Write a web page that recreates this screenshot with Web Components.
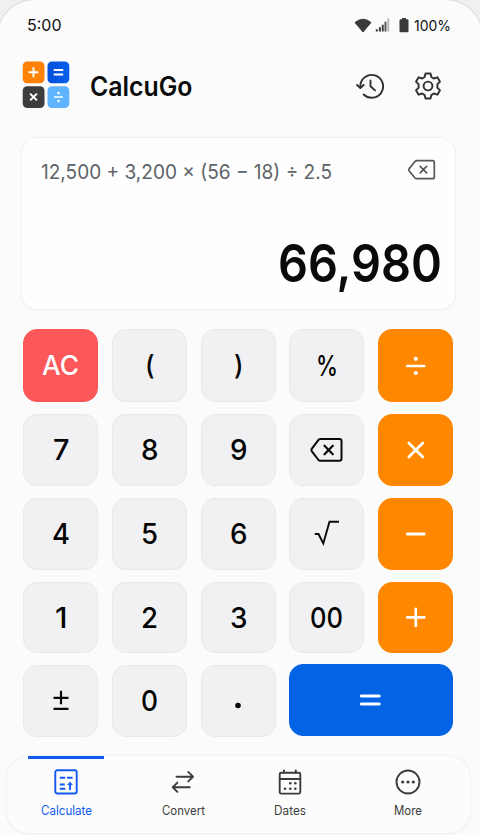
<!DOCTYPE html>
<html lang="en">
<head>
<meta charset="utf-8">
<title>CalcuGo</title>
<style>
html,body{margin:0;height:100%;background:#f0f0f1;overflow:hidden}
body{font-family:Inter,"Liberation Sans",sans-serif;color:#0a0a0a}
</style>
</head>
<body>
<calcu-app></calcu-app>
<script>
const ICONS = {
  wifi: [18,15,'<path d="M1 4.500Q9-2 17 4.500L9 14Z" fill="#3a3a3a" stroke="#3a3a3a" stroke-linejoin="round"/>'],
  signal: [15,14,'<path d="M.8 11.200h2v2.300h-2zM3.900 9.200h2v4.300h-2zM6.800 6.700h1.900v6.800h-1.900z" fill="#3a3a3a"/><path d="M9.500 3.700h1.900v9.800h-1.900z" fill="#555"/><path d="M12.200.5h2v13h-2z" fill="#b9b9b9"/>'],
  battery: [10,16,'<path d="M3 1h4v1.200h1.300q1.200 0 1.200 1.200v10.600q0 1.200-1.200 1.200H1.700Q.5 15.200.5 14V3.400Q.5 2.200 1.700 2.200H3Z" fill="#3a3a3a"/>'],
  history: [28,26,'<g fill="none" stroke="#303030" stroke-width="1.900" stroke-linecap="round" stroke-linejoin="round"><path d="M4.300 14.500V12.800A11.400 11.400 0 1 1 7.700 21.500"/><path d="M1 12l3.400 3.100L7.600 12"/><path d="M14.500 7.500v5.700l4.500 4.200"/></g>'],
  gear: [28,28,'<g fill="none" stroke="#303030" stroke-width="1.900" stroke-linejoin="round"><path d="M11.500 1.500h5l.9 3.600q1.300.5 2.300 1.400l3.700-1.200 2.600 4.400-2.700 2.700q.3 1.600 0 3.200l2.700 2.700-2.600 4.400-3.700-1.200q-1 .9-2.300 1.400l-.9 3.600h-5l-.9-3.600q-1.300-.5-2.300-1.400l-3.700 1.200L2 18.300l2.700-2.700q-.3-1.600 0-3.200L2 9.700l2.600-4.400 3.700 1.200q1-.9 2.300-1.400Z"/><circle cx="14" cy="14" r="4.400"/></g>'],
  erase: [28,22,'<g fill="none" stroke="#55585b" stroke-width="1.700" stroke-linecap="round" stroke-linejoin="round"><path d="M8.800 1.700H24.500Q26.300 1.700 26.300 3.500V17.900Q26.300 19.700 24.500 19.700H8.800Q7.700 19.700 7 19L1.200 12Q.4 10.800 1.200 9.600L7 2.500Q7.700 1.700 8.800 1.700Z"/><path d="M12.200 7.300l6.400 6.600M18.600 7.300l-6.400 6.600"/></g>'],
  backspace: [33,26,'<g fill="none" stroke="#0a0a0a" stroke-width="2" stroke-linecap="round" stroke-linejoin="round"><path d="M10.300 2H29.500Q31.500 2 31.500 4V21.800Q31.500 23.800 29.500 23.800H10.300Q9.300 23.800 8.500 23L1.900 14.300Q1 13 1.900 11.600L8.500 2.900Q9.300 2 10.300 2Z"/><path d="M14.500 8.700l8.300 8.600M22.800 8.700l-8.300 8.600" stroke-width="2.200"/></g>'],
  root: [26,29,'<path d="M.8 14h3.700L9.300 23.500 15.500 1.800H25" fill="none" stroke="#0a0a0a" stroke-width="1.900"/>'],
  divide: [20,20,'<path d="M1.300 10h17" stroke="#fff" stroke-width="2.700" stroke-linecap="round"/><circle cx="9.800" cy="2.800" r="2.100" fill="#fff"/><circle cx="9.800" cy="17" r="2.100" fill="#fff"/>'],
  times: [20,20,'<path d="M2.800 3l14 14M16.800 3L2.800 17" stroke="#fff" stroke-width="2.700" stroke-linecap="round"/>'],
  minus: [20,20,'<path d="M1.300 10h17" stroke="#fff" stroke-width="2.800" stroke-linecap="round"/>'],
  plus: [20,22,'<path d="M1.300 10.400h17M9.800 1.900v17" stroke="#fff" stroke-width="2.600" stroke-linecap="round"/>'],
  equal: [22,14,'<path d="M1.200 3h18M1.200 11h18" stroke="#fff" stroke-width="3" stroke-linecap="round"/>'],
  plusminus: [16,22,'<path d="M.5 7.800h15M8 .8v13.500M.5 18.800h15" stroke="#0a0a0a" stroke-width="2.200" fill="none"/>'],
  dot: [6,16,'<circle cx="3" cy="12.500" r="2.800" fill="#0a0a0a"/>'],
  calculate: [24,26,'<g fill="none" stroke="#1259f0" stroke-width="1.900"><rect x="1.300" y="1.300" width="21.400" height="23.200" rx="2"/><path d="M5.800 8.700h5.400M13 8.700h5.600M5.800 15.500h5M5.800 19.700h5.400M16 13.500v7.600"/><path d="M13.700 15.700L16 13.300l2.300 2.400Z" fill="#1259f0" stroke-width=".8"/></g>'],
  convert: [24,24,'<g fill="none" stroke="#3c3c3c" stroke-width="1.900" stroke-linecap="round" stroke-linejoin="round"><path d="M5.500 6.700H22M17.200 1.900L22 6.700l-4.800 4.700M18.800 17.300H1.800M6.400 12.600l-4.700 4.700 4.700 4.600"/></g>'],
  dates: [24,26,'<g fill="none" stroke="#3c3c3c" stroke-width="1.900" stroke-linecap="round"><rect x="1.700" y="3.800" width="20.600" height="20.800" rx="1.500"/><path d="M1.700 10h20.600M6 1.500v2.300M17.800 1.500v2.300"/></g><g fill="#3c3c3c"><circle cx="12.300" cy="14.200" r="1.300"/><circle cx="17.300" cy="14.200" r="1.300"/><circle cx="7" cy="19.700" r="1.300"/><circle cx="12.300" cy="19.700" r="1.300"/><circle cx="17.300" cy="19.700" r="1.300"/></g>'],
  more: [26,26,'<circle cx="13" cy="13" r="11.500" fill="none" stroke="#3c3c3c" stroke-width="1.900"/><g fill="#3c3c3c"><circle cx="7.700" cy="13" r="1.600"/><circle cx="13" cy="13" r="1.600"/><circle cx="18.300" cy="13" r="1.600"/></g>'],
  logo: [48,48,'<defs><linearGradient id="b" x2="1"><stop stop-color="#0050da"/><stop offset="1" stop-color="#0a60ec"/></linearGradient></defs><rect x=".700" y=".500" width="21.800" height="21.800" rx="4.500" fill="#ff8205"/><rect x="25.500" y=".500" width="21.800" height="21.800" rx="4.500" fill="url(#b)"/><rect x=".700" y="25.200" width="21.800" height="21.800" rx="4.500" fill="#3d3d3e"/><rect x="25.500" y="25.200" width="21.800" height="21.800" rx="4.500" fill="#5eb4ff"/><path d="M6.500 11.300h10M11.500 6.300v10M31.700 9h9.500M31.700 13.500h9.500M8.100 32.600l6.800 6.800M14.900 32.600L8.100 39.400" stroke="#fff" stroke-width="2"/><path d="M32 36h9" stroke="#fff" stroke-width="1.500"/><circle cx="36.500" cy="32" r="1.300" fill="#fff"/><circle cx="36.500" cy="40" r="1.300" fill="#fff"/>']
};
class UiIcon extends HTMLElement{
  connectedCallback(){
    const [w,h,body]=ICONS[this.getAttribute('name')];
    this.attachShadow({mode:'open'}).innerHTML=`<style>:host{display:block;flex:none;width:${w}px;height:${h}px}svg{display:block}</style><svg width="${w}" height="${h}" viewBox="0 0 ${w} ${h}">${body}</svg>`;
  }
}
/* One line of text set to an exact measure. */
class FitText extends HTMLElement{
  connectedCallback(){
    const w=+this.getAttribute('width'),s=+this.getAttribute('size'),wt=this.getAttribute('weight')||400;
    this.attachShadow({mode:'open'}).innerHTML=`<style>:host{display:block;flex:none;width:${w}px;height:${s}px}svg{display:block;overflow:visible}text{font-size:${s}px;font-weight:${wt};fill:currentColor}</style><svg width="${w}" height="${s}"><text x="0" y="${s*.864}" textLength="${w}" lengthAdjust="spacingAndGlyphs">${this.getAttribute('text')}</text></svg>`;
  }
}
class StatusBar extends HTMLElement{
  connectedCallback(){
    this.attachShadow({mode:'open'}).innerHTML=`<style>
:host{display:flex;align-items:center;height:50px;padding:0 29px 0 27px;box-sizing:border-box;color:#111}
.s{flex:1}.sig{margin:0 9px 0 3px}.bat{margin-right:5px}</style>
<fit-text text="5:00" width="34.500" size="16.500" weight="430"></fit-text><span class="s"></span>
<ui-icon name="wifi"></ui-icon><ui-icon class="sig" name="signal"></ui-icon><ui-icon class="bat" name="battery"></ui-icon>
<fit-text text="100%" width="37" size="15" weight="430"></fit-text>`;
  }
}
class AppHeader extends HTMLElement{
  connectedCallback(){
    this.attachShadow({mode:'open'}).innerHTML=`<style>
:host{display:flex;align-items:center;height:70px;padding:0 38px 0 22px;box-sizing:border-box}
.t{margin:2px 0 0 20px}.s{flex:1}.g{margin:2px 0 0 30px}.h{margin-top:2px}</style>
<ui-icon name="logo"></ui-icon><fit-text class="t" text="CalcuGo" width="102.500" size="26.500" weight="580"></fit-text><span class="s"></span>
<ui-icon class="h" name="history"></ui-icon><ui-icon class="g" name="gear"></ui-icon>`;
  }
}
class CalcDisplay extends HTMLElement{
  connectedCallback(){
    this.attachShadow({mode:'open'}).innerHTML=`<style>
:host{display:flex;flex-direction:column;justify-content:space-between;height:171px;margin:18px 25px 0 22px;padding:20px 13px 20px 19px;box-sizing:border-box;background:#fefefe;border-radius:15px;box-shadow:0 0 0 1px #f2f2f3,0 1px 3px rgba(0,0,0,.07)}
.e{display:flex;justify-content:space-between;align-items:center;color:#606366;padding-right:6px}
.e fit-text{margin-top:4px}
.e ui-icon{margin-top:-1px}
.r{display:flex;justify-content:flex-end}</style>
<div class="e"><fit-text text="12,500 + 3,200 × (56 − 18) ÷ 2.5" width="291" size="20"></fit-text><ui-icon name="erase"></ui-icon></div>
<div class="r"><fit-text text="66,980" width="164" size="52.500" weight="600"></fit-text></div>`;
  }
}
class CalcKey extends HTMLElement{
  connectedCallback(){
    this.attachShadow({mode:'open'}).innerHTML=`<style>
:host{display:flex;align-items:center;justify-content:center;box-sizing:border-box;border-radius:14px;background:#f1f1f3;border:1px solid #e9e9eb;color:#050505}
:host([kind=op]){background:#ff8800;border-color:#fb8500}
:host([kind=clear]){background:#fc5759;border-color:#fa5557;color:#fff}
:host([kind=equal]){grid-column:span 2;background:#0263e4;border-color:#0060df;margin:-1px 0 1px}
</style><slot></slot>`;
  }
}
class CalcPad extends HTMLElement{
  connectedCallback(){
    const t=(s,w,z=28,wt=450)=>`<calc-key><fit-text text="${s}" width="${w}" size="${z}" weight="${wt}"></fit-text></calc-key>`;
    const i=(n,k='')=>`<calc-key kind="${k}"><ui-icon name="${n}"></ui-icon></calc-key>`;
    this.attachShadow({mode:'open'}).innerHTML=`<style>
:host{display:grid;grid-template-columns:repeat(5,75px);grid-template-rows:73px 72px 72px 71px 72px;column-gap:13.700px;row-gap:12px;margin:20px 0 0 23.400px}</style>
<calc-key kind="clear"><fit-text text="AC" width="37" size="27" weight="450"></fit-text></calc-key>${t('(',9.5,27)}${t(')',9.5,27)}${t('%',22,28,450)}${i('divide','op')}
${t('7',16.5)}${t('8',17.5)}${t('9',17.5)}${i('backspace')}${i('times','op')}
${t('4',18)}${t('5',17)}${t('6',17.5)}${i('root')}${i('minus','op')}
${t('1',12.5)}${t('2',17)}${t('3',17.5)}${t('00',33)}${i('plus','op')}
${i('plusminus')}${t('0',17)}${i('dot')}${i('equal','equal')}`;
  }
}
class NavItem extends HTMLElement{
  connectedCallback(){
    this.attachShadow({mode:'open'}).innerHTML=`<style>
:host{display:flex;flex-direction:column;align-items:center;box-sizing:border-box;padding-top:10px;border-top:3px solid transparent;color:#3c3c3c}
:host([active]){border-top-color:#1259f0;color:#1259f0}
.i{height:26px;display:flex;align-items:center;margin-bottom:9px}</style>
<span class="i"><ui-icon name="${this.getAttribute('icon')}"></ui-icon></span>
<fit-text text="${this.getAttribute('label')}" width="${this.getAttribute('measure')}" size="12.500" weight="420"></fit-text>`;
  }
}
class BottomNav extends HTMLElement{
  connectedCallback(){
    this.attachShadow({mode:'open'}).innerHTML=`<style>
:host{display:grid;grid-template-columns:76px 76px 76px 76px;column-gap:41px;height:77px;margin:19px 10px 0 7px;padding-left:21px;background:#fcfcfd;border-radius:22px;box-shadow:0 0 0 1px #f2f2f3,0 1px 3px rgba(0,0,0,.07)}
.d{margin-left:-10px;margin-right:10px}.m{margin-left:-9px;margin-right:9px}</style>
<nav-item active icon="calculate" label="Calculate" measure="51"></nav-item>
<nav-item icon="convert" label="Convert" measure="43"></nav-item>
<nav-item class="d" icon="dates" label="Dates" measure="32"></nav-item>
<nav-item class="m" icon="more" label="More" measure="28"></nav-item>`;
  }
}
class CalcuApp extends HTMLElement{
  connectedCallback(){
    this.attachShadow({mode:'open'}).innerHTML=`<style>
:host{display:block;width:484px;height:858px;margin-left:-2px;padding:0 2px;box-sizing:border-box;background:#fbfbfc;border-radius:36px;box-shadow:0 0 0 1px #dcdcde}</style>
<status-bar></status-bar><app-header></app-header><calc-display></calc-display><calc-pad></calc-pad><bottom-nav></bottom-nav>`;
  }
}
for(const [n,c] of Object.entries({'ui-icon':UiIcon,'fit-text':FitText,'status-bar':StatusBar,'app-header':AppHeader,'calc-display':CalcDisplay,'calc-key':CalcKey,'calc-pad':CalcPad,'nav-item':NavItem,'bottom-nav':BottomNav,'calcu-app':CalcuApp}))customElements.define(n,c);
</script>
</body>
</html>
